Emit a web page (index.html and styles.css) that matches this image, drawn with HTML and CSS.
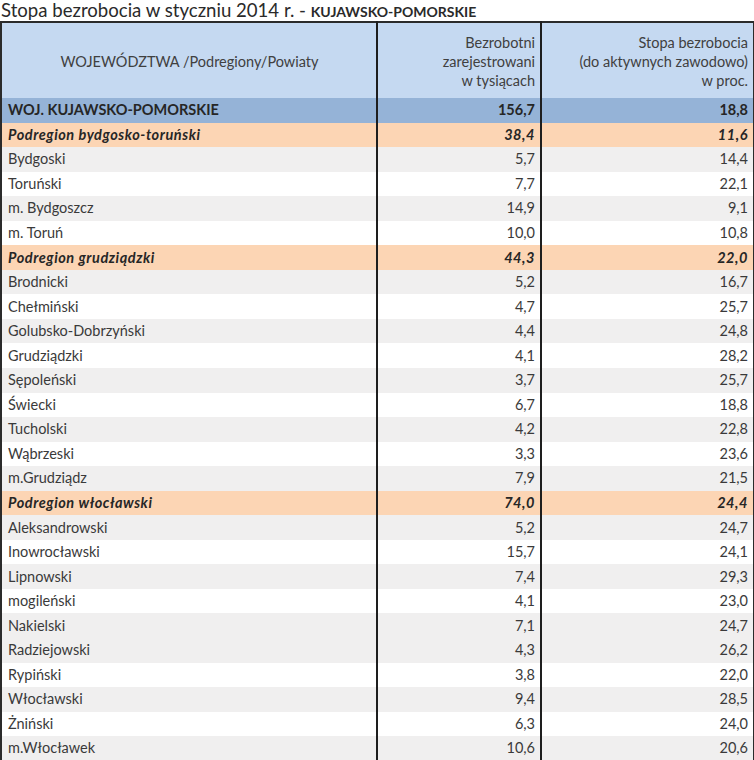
FILE: index.html
```html
<!DOCTYPE html>
<html lang="pl">
<head>
<meta charset="utf-8">
<title>Stopa bezrobocia</title>
<link rel="stylesheet" href="styles.css">
</head>
<body>
<div class="title">Stopa bezrobocia w styczniu 2014 r. - <b>KUJAWSKO-POMORSKIE</b></div>
<table class="tbl">
<colgroup><col class="c1"><col class="c2"><col class="c3"></colgroup>
<thead>
<tr class="head">
<th class="name">WOJEWÓDZTWA /Podregiony/Powiaty</th>
<th class="num">Bezrobotni<br>zarejestrowani<br>w tysiącach</th>
<th class="num">Stopa bezrobocia<br>(do aktywnych zawodowo)<br>w proc.</th>
</tr>
</thead>
<tbody>
<tr class="woj"><td>WOJ. KUJAWSKO-POMORSKIE</td><td>156,7</td><td>18,8</td></tr>
<tr class="pod"><td>Podregion bydgosko-toruński</td><td>38,4</td><td>11,6</td></tr>
<tr class="g"><td>Bydgoski</td><td>5,7</td><td>14,4</td></tr>
<tr class="w"><td>Toruński</td><td>7,7</td><td>22,1</td></tr>
<tr class="g"><td>m. Bydgoszcz</td><td>14,9</td><td>9,1</td></tr>
<tr class="w"><td>m. Toruń</td><td>10,0</td><td>10,8</td></tr>
<tr class="pod"><td>Podregion grudziądzki</td><td>44,3</td><td>22,0</td></tr>
<tr class="g"><td>Brodnicki</td><td>5,2</td><td>16,7</td></tr>
<tr class="w"><td>Chełmiński</td><td>4,7</td><td>25,7</td></tr>
<tr class="g"><td>Golubsko-Dobrzyński</td><td>4,4</td><td>24,8</td></tr>
<tr class="w"><td>Grudziądzki</td><td>4,1</td><td>28,2</td></tr>
<tr class="g"><td>Sępoleński</td><td>3,7</td><td>25,7</td></tr>
<tr class="w"><td>Świecki</td><td>6,7</td><td>18,8</td></tr>
<tr class="g"><td>Tucholski</td><td>4,2</td><td>22,8</td></tr>
<tr class="w"><td>Wąbrzeski</td><td>3,3</td><td>23,6</td></tr>
<tr class="g"><td>m.Grudziądz</td><td>7,9</td><td>21,5</td></tr>
<tr class="pod"><td>Podregion włocławski</td><td>74,0</td><td>24,4</td></tr>
<tr class="g"><td>Aleksandrowski</td><td>5,2</td><td>24,7</td></tr>
<tr class="w"><td>Inowrocławski</td><td>15,7</td><td>24,1</td></tr>
<tr class="g"><td>Lipnowski</td><td>7,4</td><td>29,3</td></tr>
<tr class="w"><td>mogileński</td><td>4,1</td><td>23,0</td></tr>
<tr class="g"><td>Nakielski</td><td>7,1</td><td>24,7</td></tr>
<tr class="g"><td>Radziejowski</td><td>4,3</td><td>26,2</td></tr>
<tr class="w"><td>Rypiński</td><td>3,8</td><td>22,0</td></tr>
<tr class="g"><td>Włocławski</td><td>9,4</td><td>28,5</td></tr>
<tr class="w"><td>Żniński</td><td>6,3</td><td>24,0</td></tr>
<tr class="g"><td>m.Włocławek</td><td>10,6</td><td>20,6</td></tr>
</tbody>
</table>
</body>
</html>
```
FILE: styles.css
```css
html, body {
  margin: 0;
  padding: 0;
  background: #ffffff;
}
body {
  font-family: Lato, "Open Sans", "Liberation Sans", sans-serif;
  color: #3a3a3a;
  width: 754px;
}
.title {
  height: 21px;
  line-height: 21px;
  font-size: 18.6px;
  color: #2a2a2a;
  padding-left: 1px;
  white-space: nowrap;
}
.title b {
  font-size: 14px;
  font-weight: 700;
}
.tbl {
  border-collapse: collapse;
  width: 753px;
  table-layout: fixed;
  border: 2px solid #2b2b2b;
  font-size: 14.5px;
}
.c1 { width: 376px; }
.c2 { width: 164px; }
.c3 { width: 213px; }
.tbl th, .tbl td {
  padding: 0 5px 0 6px;
  white-space: nowrap;
}
.tbl th + th, .tbl td + td {
  border-left: 2px solid #1e1e1e;
  text-align: right;
}
.head th {
  background: #c5d9f1;
  height: 74px;
  font-weight: 400;
  line-height: 19px;
  color: #404040;
  padding-top: 1px;
}
.head th.name {
  text-align: center;
}
.tbl tbody tr {
  height: 24.55px;
}
.tbl td {
  line-height: 18px;
}
.woj td {
  background: #95b3d7;
  font-weight: 700;
  color: #262626;
}
.pod td {
  background: #fcd5b4;
  font-weight: 700;
  font-style: italic;
  color: #262626;
  letter-spacing: 0.55px;
}
.g td {
  background: #f0efef;
}
.w td {
  background: #ffffff;
}
```
